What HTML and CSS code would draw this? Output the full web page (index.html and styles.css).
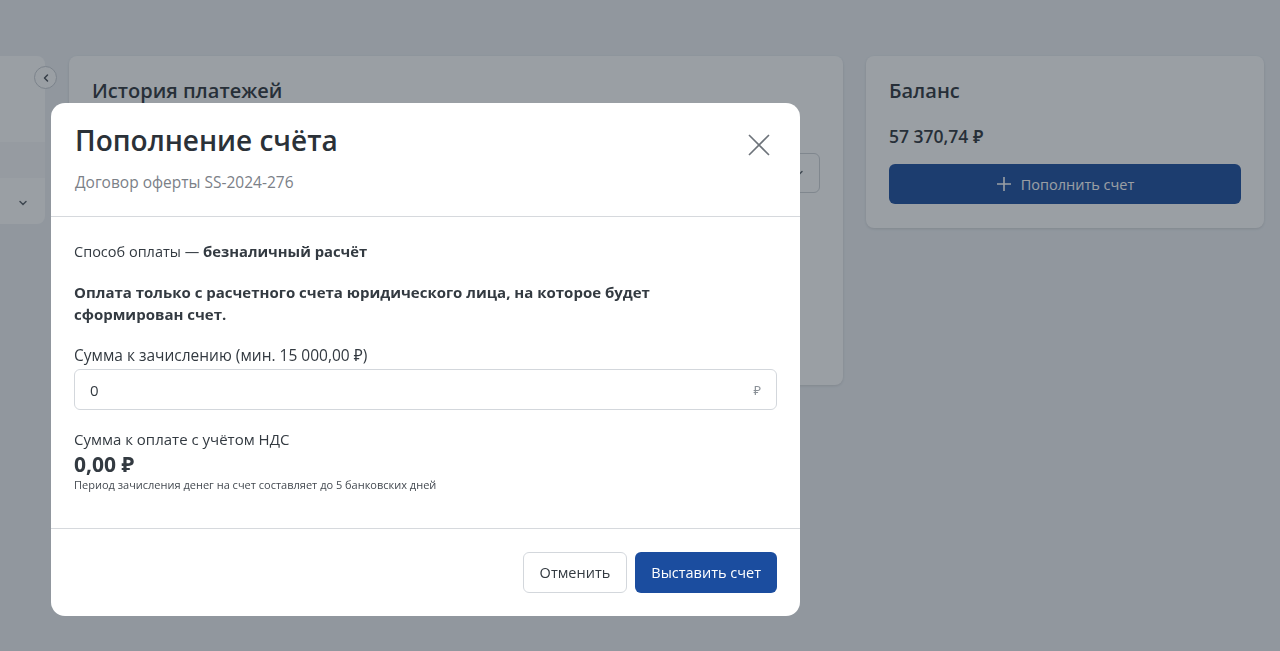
FILE: index.html
```html
<!DOCTYPE html>
<html lang="ru">
<head>
    <meta charset="UTF-8">
    <meta name="viewport" content="width=device-width, initial-scale=1.0">
    <title>Пополнение счёта</title>
    <link rel="stylesheet" href="styles.css">
</head>
<body>

    <div class="page">
        <!-- Sidebar (collapsed) -->
        <div class="sidebar">
            <div class="side-row"></div>
            <div class="side-row active"></div>
            <div class="side-row last">
                <svg width="12" height="12" viewBox="0 0 12 12"><path d="M3 4.5 L6 7.5 L9 4.5" fill="none" stroke="#5a6169" stroke-width="1.5" stroke-linecap="round"/></svg>
            </div>
            <button class="collapse-btn">
                <svg width="12" height="12" viewBox="0 0 12 12"><path d="M7.5 3 L4.5 6 L7.5 9" fill="none" stroke="#4a5058" stroke-width="1.5" stroke-linecap="round" stroke-linejoin="round"/></svg>
            </button>
        </div>

        <!-- History -->
        <div class="card history">
            <div class="card-title">История платежей</div>
            <div class="filter-row">
                <div class="select">
                    <svg width="12" height="12" viewBox="0 0 12 12"><path d="M3 4.5 L6 7.5 L9 4.5" fill="none" stroke="#5a6169" stroke-width="1.5" stroke-linecap="round"/></svg>
                </div>
            </div>
        </div>

        <!-- Balance -->
        <div class="card balance">
            <div class="card-title">Баланс</div>
            <div class="balance-sum">57 370,74 ₽</div>
            <button class="btn-primary wide">
                <svg width="16" height="16" viewBox="0 0 16 16"><path d="M8 1 V15 M1 8 H15" stroke="#fff" stroke-width="1.6"/></svg>
                Пополнить счет
            </button>
        </div>
    </div>

    <!-- Modal -->
    <div class="overlay">
        <div class="modal">
            <div class="modal-header">
                <div>
                    <div class="modal-title">Пополнение счёта</div>
                    <div class="modal-sub">Договор оферты SS-2024-276</div>
                </div>
                <button class="close-btn">
                    <svg width="24" height="24" viewBox="0 0 24 24"><path d="M2 2 L22 22 M22 2 L2 22" stroke="#6d737a" stroke-width="1.6"/></svg>
                </button>
            </div>

            <div class="modal-body">
                <p class="method">Способ оплаты — <b>безналичный расчёт</b></p>
                <p class="notice">Оплата только с расчетного счета юридического лица, на которое будет сформирован счет.</p>

                <label class="field-label">Сумма к зачислению (мин. 15 000,00 ₽)</label>
                <div class="input-box">
                    <input type="text" value="0" class="input-field">
                    <span class="currency">₽</span>
                </div>

                <div class="total-label">Сумма к оплате с учётом НДС</div>
                <div class="total">0,00 ₽</div>
                <div class="hint">Период зачисления денег на счет составляет до 5 банковских дней</div>
            </div>

            <div class="modal-footer">
                <button class="btn-outline">Отменить</button>
                <button class="btn-primary">Выставить счет</button>
            </div>
        </div>
    </div>

</body>
</html>
```

FILE: styles.css
```css
* {
    margin: 0;
    padding: 0;
    box-sizing: border-box;
    font-family: 'Open Sans', 'Noto Sans', sans-serif;
}
body {
    height: 100vh;
    overflow: hidden;
    background: #eef1f5;
    color: #2e343b;
}
button {
    border: none;
    background: none;
    cursor: pointer;
}
.page {
    display: flex;
    align-items: flex-start;
    gap: 24px;
    padding-top: 56px;
}
.sidebar {
    position: relative;
    width: 45px;
    height: 168px;
    background: #fff;
    border-radius: 0 8px 8px 0;
    display: flex;
    flex-direction: column;
}
.side-row {
    height: 86px;
}
.side-row.active {
    height: 36px;
    background: #f7f8fa;
}
.side-row.last {
    height: 46px;
    display: flex;
    align-items: center;
    justify-content: center;
    padding-top: 4px;
}
.collapse-btn {
    position: absolute;
    right: -12px;
    top: 10px;
    width: 23px;
    height: 23px;
    border-radius: 50%;
    border: 1px solid #c8ccd2;
    background: #fff;
    display: flex;
    align-items: center;
    justify-content: center;
}
.card {
    background: #fff;
    border-radius: 8px;
    box-shadow: 0 1px 3px rgba(0, 0, 0, 0.12);
    padding: 21px 23px;
}
.card-title {
    font-size: 20px;
    font-weight: 600;
    color: #2e343b;
}
.history {
    width: 774px;
    height: 329px;
}
.filter-row {
    display: flex;
    justify-content: flex-end;
    margin-top: 49px;
}
.select {
    width: 180px;
    height: 40px;
    border: 1px solid #cfd3d8;
    border-radius: 6px;
    display: flex;
    align-items: center;
    justify-content: flex-end;
    padding-right: 14px;
}
.balance {
    width: 398px;
    height: 172px;
    margin-left: -1px;
}
.balance-sum {
    font-size: 17.5px;
    font-weight: 600;
    margin-top: 20px;
}
.btn-primary {
    background: #1b4d9f;
    color: #fff;
    font-size: 14.5px;
    height: 40px;
    padding: 0 16px;
    border-radius: 6px;
    display: inline-flex;
    align-items: center;
    justify-content: center;
    gap: 9px;
}
.btn-primary.wide {
    width: 100%;
    margin-top: 16px;
}
.overlay {
    position: fixed;
    inset: 0;
    background: rgba(32, 42, 54, 0.45);
    padding: 103px 0 0 51px;
}
.modal {
    width: 749px;
    height: 513px;
    background: #fff;
    border-radius: 14px;
    display: flex;
    flex-direction: column;
}
.modal-header {
    display: flex;
    justify-content: space-between;
    align-items: flex-start;
    padding: 18px 23px 0 24px;
    height: 114px;
    border-bottom: 1px solid #d6d9dd;
}
.modal-title {
    font-size: 28px;
    font-weight: 600;
    color: #2b3138;
}
.modal-sub {
    font-size: 15.5px;
    color: #7b8087;
    margin-top: 12px;
}
.close-btn {
    margin-top: 12px;
    margin-right: 6px;
    width: 24px;
    height: 24px;
}
.modal-body {
    padding: 23px 23px 0 23px;
    flex: 1;
    font-size: 15.5px;
    color: #333a41;
    border-bottom: 1px solid #d6d9dd;
}
.method {
    font-size: 14.5px;
    line-height: 22px;
}
.method b {
    font-size: 14.8px;
    font-weight: 700;
}
.notice {
    font-size: 15px;
    font-weight: 700;
    line-height: 22px;
    margin-top: 18px;
    max-width: 640px;
}
.field-label {
    display: block;
    margin-top: 19px;
    line-height: 22px;
}
.input-box {
    margin-top: 3px;
    height: 41px;
    border: 1px solid #d3d7dc;
    border-radius: 6px;
    display: flex;
    align-items: center;
    padding: 0 15px;
}
.input-field {
    flex: 1;
    border: none;
    outline: none;
    font-size: 15px;
    color: #333a41;
}
.currency {
    color: #8a9097;
    font-size: 13px;
}
.total-label {
    font-size: 15px;
    margin-top: 19px;
    line-height: 20px;
}
.total {
    font-size: 21px;
    font-weight: 700;
    line-height: 26px;
    margin-top: 2px;
}
.hint {
    font-size: 11px;
    line-height: 15px;
    color: #444a51;
}
.modal-footer {
    display: flex;
    justify-content: flex-end;
    gap: 8px;
    padding: 23px 23px 0 0;
    height: 87px;
}
.btn-outline {
    height: 41px;
    padding: 0 16px;
    border: 1px solid #d3d7dc;
    border-radius: 6px;
    font-size: 14.5px;
    color: #333a41;
    background: #fff;
}
.modal-footer .btn-primary {
    height: 41px;
}
```
